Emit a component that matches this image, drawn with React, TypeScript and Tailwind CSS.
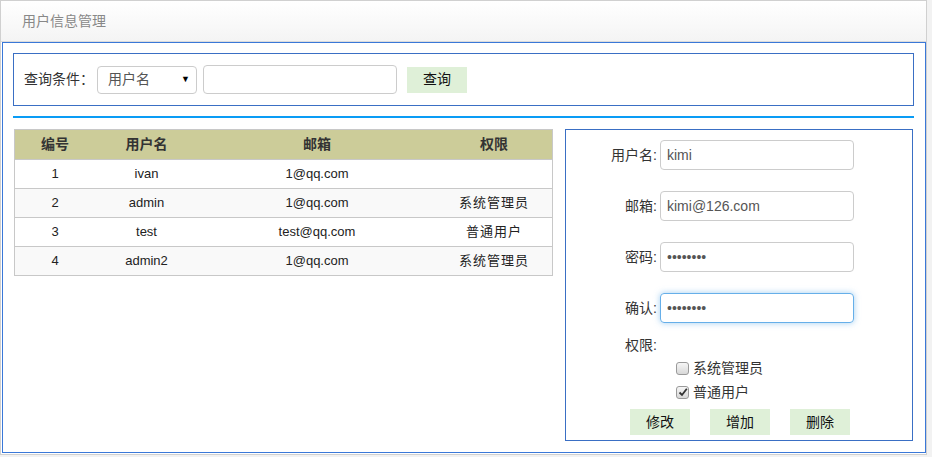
import React from "react";

const F = "font-[family-name:Liberation_Sans,Noto_Sans_CJK_SC,sans-serif]";

const rows = [
  { id: "1", name: "ivan", mail: "1@qq.com", role: "" },
  { id: "2", name: "admin", mail: "1@qq.com", role: "系统管理员" },
  { id: "3", name: "test", mail: "test@qq.com", role: "普通用户" },
  { id: "4", name: "admin2", mail: "1@qq.com", role: "系统管理员" },
];

function Box({ checked }: { checked?: boolean }) {
  return (
    <span className="w-[13px] h-[13px] rounded-[3px] border border-[#9a9a9a] bg-gradient-to-b from-[#f6f6f6] to-[#d8d8d8] flex items-center justify-center">
      {checked && (
        <svg width="10" height="10" viewBox="0 0 10 10">
          <path d="M1.5 5.5 L4 8 L8.8 1.8" fill="none" stroke="#333" strokeWidth="1.8" />
        </svg>
      )}
    </span>
  );
}

function FormRow({ label, value, type = "text", focus }: { label: string; value: string; type?: string; focus?: boolean }) {
  return (
    <div className="flex items-center h-[30px]">
      <span className="w-[91px] text-right text-[14px] leading-[20px] text-[#333]">{label}</span>
      <input
        readOnly
        type={type}
        value={value}
        className={
          focus
            ? "ml-[3px] w-[194px] h-[30px] rounded-[4px] border border-[#66afe9] px-[6px] text-[14px] text-[#555] outline-none shadow-[0_0_6px_rgba(102,175,233,0.6)]"
            : "ml-[3px] w-[194px] h-[30px] rounded-[4px] border border-[#ccc] px-[6px] text-[14px] text-[#555] outline-none"
        }
      />
    </div>
  );
}

export default function App() {
  return (
    <div className={`w-[932px] h-[457px] bg-[#f2f2f2] ${F}`}>
      <div className="w-[927px] h-[455px] border border-[#d0d0d0] bg-white flex flex-col">
        <div className="h-[41px] shrink-0 border-b border-[#dcdcdc] bg-gradient-to-b from-white to-[#f4f4f4] pl-[21px] flex items-center text-[14px] text-[#888]">
          用户信息管理
        </div>
        <div className="ml-px w-[924px] h-[411px] border border-[#3a78d8] pt-[10px] pl-[10px]">
          {/* search */}
          <div className="w-[901px] h-[53px] border border-[#3a6fc4] flex items-center pl-[10px]">
            <span className="text-[14px] text-[#333] w-[70px]">查询条件：</span>
            <div className="ml-[3px] w-[100px] h-[28px] border border-[#ccc] rounded-[4px] flex items-center justify-between pl-[10px] pr-[6px] text-[14px] text-[#555]">
              <span>用户名</span>
              <span className="text-[9px] text-black">▼</span>
            </div>
            <input readOnly className="ml-[6px] w-[194px] h-[29px] border border-[#ccc] rounded-[4px] outline-none" />
            <button className="ml-[10px] w-[60px] h-[26px] bg-[#dff0d8] text-[14px] text-[#111]">查询</button>
          </div>
          <div className="mt-[10px] w-[901px] h-[2px] bg-[#0a9cf5]" />
          <div className="mt-[11px] flex items-start pl-px">
            {/* table */}
            <div className="w-[539px] border border-[#c8c8c8]">
              <div className="grid grid-cols-[80px_103px_238px_1fr] h-[29px] bg-[#cccc99] items-center text-center text-[14px] font-bold text-[#333]">
                <span>编号</span>
                <span>用户名</span>
                <span>邮箱</span>
                <span>权限</span>
              </div>
              {rows.map((r, i) => (
                <div
                  key={r.id}
                  className={
                    "grid grid-cols-[80px_103px_238px_1fr] h-[29px] items-center text-center text-[13px] text-[#222] border-t border-[#c8c8c8] " +
                    (i % 2 === 1 ? "bg-[#f9f9f9]" : "bg-white")
                  }
                >
                  <span>{r.id}</span>
                  <span>{r.name}</span>
                  <span>{r.mail}</span>
                  <span className="tracking-[1px]">{r.role}</span>
                </div>
              ))}
            </div>
            {/* form */}
            <div className="ml-[12px] w-[348px] h-[312px] border border-[#3a6fc4] pt-[10px] flex flex-col">
              <div className="flex flex-col gap-[21px]">
                <FormRow label="用户名:" value="kimi" />
                <FormRow label="邮箱:" value="kimi@126.com" />
                <FormRow label="密码:" value="12345678" type="password" />
                <FormRow label="确认:" value="12345678" type="password" focus />
              </div>
              <div className="mt-[12px] h-[20px] flex items-center">
                <span className="w-[91px] text-right text-[14px] text-[#333]">权限:</span>
              </div>
              <div className="mt-px pl-[110px] flex flex-col text-[14px] text-[#333]">
                <label className="h-[24px] flex items-center gap-[4px]">
                  <Box />
                  <span>系统管理员</span>
                </label>
                <label className="h-[24px] flex items-center gap-[4px]">
                  <Box checked />
                  <span>普通用户</span>
                </label>
              </div>
              <div className="mt-[5px] pl-[64px] flex gap-[20px]">
                <button className="w-[60px] h-[26px] bg-[#dff0d8] text-[14px] text-[#111]">修改</button>
                <button className="w-[60px] h-[26px] bg-[#dff0d8] text-[14px] text-[#111]">增加</button>
                <button className="w-[60px] h-[26px] bg-[#dff0d8] text-[14px] text-[#111]">删除</button>
              </div>
            </div>
          </div>
        </div>
      </div>
    </div>
  );
}
